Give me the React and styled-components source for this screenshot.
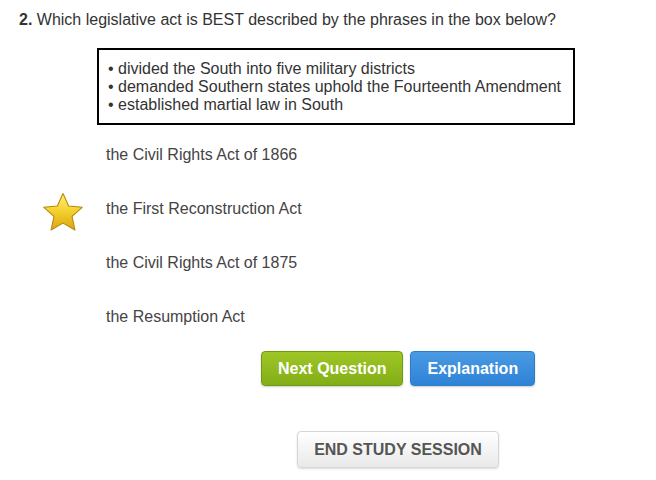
import React from "react";
import styled, { createGlobalStyle } from "styled-components";

const GlobalStyle = createGlobalStyle`
  body {
    margin: 0;
    background: #ffffff;
    font-family: Arial, "Liberation Sans", sans-serif;
    color: #333333;
  }
`;

const answers = [
  "the Civil Rights Act of 1866",
  "the First Reconstruction Act",
  "the Civil Rights Act of 1875",
  "the Resumption Act",
];

const phrases = [
  "divided the South into five military districts",
  "demanded Southern states uphold the Fourteenth Amendment",
  "established martial law in South",
];

const Star = () => (
  <svg width="42" height="42" viewBox="0 0 40 40">
    <defs>
      <linearGradient id="starFill" x1="0" y1="0" x2="0" y2="1">
        <stop offset="0" stopColor="#fff27a" />
        <stop offset="0.5" stopColor="#f3cf2c" />
        <stop offset="1" stopColor="#d9a614" />
      </linearGradient>
    </defs>
    <polygon
      points="20,1.5 25.4,13.4 38.3,14.6 28.6,23.3 31.4,36.2 20,29.6 8.6,36.2 11.4,23.3 1.7,14.6 14.6,13.4"
      fill="url(#starFill)"
      stroke="#b8860b"
      strokeWidth="1"
      strokeLinejoin="round"
    />
  </svg>
);

const App = () => {
  return (
    <StyledRoot>
      <GlobalStyle />
      <StyledQuestion>
        <b>2.</b> Which legislative act is BEST described by the phrases in the
        box below?
      </StyledQuestion>
      <StyledBox>
        {phrases.map((p) => (
          <div key={p}>• {p}</div>
        ))}
      </StyledBox>
      <StyledAnswers>
        {answers.map((a, i) => (
          <StyledAnswer key={a}>
            <StyledMarker>{i === 1 && <Star />}</StyledMarker>
            <span>{a}</span>
          </StyledAnswer>
        ))}
      </StyledAnswers>
      <StyledActions>
        <StyledButton $variant="green">Next Question</StyledButton>
        <StyledButton $variant="blue">Explanation</StyledButton>
      </StyledActions>
      <StyledFooter>
        <StyledEndButton>END STUDY SESSION</StyledEndButton>
      </StyledFooter>
    </StyledRoot>
  );
};

export default App;

const StyledRoot = styled.div`
  width: 656px;
  height: 480px;
  padding: 11px 0 0 19px;
  box-sizing: border-box;
  font-size: 16px;
`;

const StyledQuestion = styled.div`
  line-height: 18px;
  color: #333333;
  & > b {
    font-weight: bold;
  }
`;

const StyledBox = styled.div`
  box-sizing: border-box;
  margin: 19px 0 0 78px;
  width: 478px;
  height: 77px;
  border: 2px solid #000000;
  padding: 10px 0 0 9px;
  line-height: 18px;
  color: #333333;
`;

const StyledAnswers = styled.div`
  margin-top: 3px;
  display: flex;
  flex-direction: column;
`;

const StyledAnswer = styled.div`
  height: 54px;
  display: flex;
  align-items: center;
  color: #444444;
`;

const StyledMarker = styled.div`
  width: 42px;
  height: 42px;
  margin: 8px 22px 0 23px;
  display: flex;
`;

const StyledActions = styled.div`
  display: flex;
  gap: 7px;
  margin: 7px 0 0 242px;
`;

const StyledButton = styled.button`
  height: 35px;
  padding: 0 16px;
  border-radius: 4px;
  font-family: Arial, "Liberation Sans", sans-serif;
  font-size: 16px;
  font-weight: bold;
  color: #ffffff;
  cursor: pointer;
  box-shadow: 0 1px 2px rgba(0, 0, 0, 0.2);
  border: 1px solid
    ${(p) => (p.$variant === "green" ? "#6f9a12" : "#2f7dc9")};
  background: ${(p) =>
    p.$variant === "green"
      ? "linear-gradient(#9fc626, #83ae17)"
      : "linear-gradient(#4a9ae3, #2f83d6)"};
`;

const StyledFooter = styled.div`
  margin: 45px 0 0 278px;
`;

const StyledEndButton = styled.button`
  width: 202px;
  height: 37px;
  border: 1px solid #d6d6d6;
  border-radius: 4px;
  background: linear-gradient(#ffffff, #e9e9e9);
  box-shadow: 0 1px 2px rgba(0, 0, 0, 0.15);
  font-family: Arial, "Liberation Sans", sans-serif;
  font-size: 16px;
  font-weight: bold;
  color: #555555;
  cursor: pointer;
`;
